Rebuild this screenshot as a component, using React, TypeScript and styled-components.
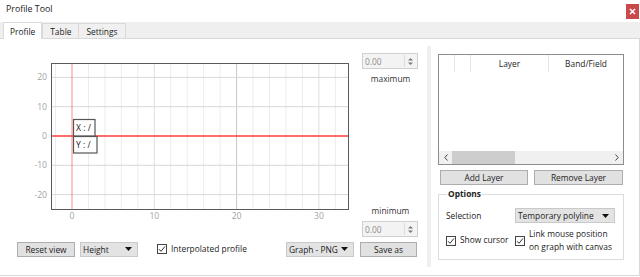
import React from "react";
import styled, { createGlobalStyle } from "styled-components";

const GlobalStyle = createGlobalStyle`
  html, body {
    margin: 0;
    padding: 0;
    background: #ffffff;
  }
  body {
    font-family: "Open Sans", "Liberation Sans", sans-serif;
    font-size: 8.4px;
    color: #222;
  }
`;

// chart scale: page px per unit, origin inside the svg
const X0 = 72;
const XS = 8.23;
const Y0 = 88;
const YS = 2.93;
const px = (v: number) => X0 + v * XS;
const py = (v: number) => Y0 - v * YS;

const xMinor = [-2, 2, 4, 6, 8, 12, 14, 16, 18, 22, 24, 26, 28, 32];
const xMajor = [10, 20, 30];
const yLines = [20, 10, -10, -20];

const Caret = () => (
  <svg width="7" height="4" viewBox="0 0 7 4">
    <path d="M0 0h7L3.5 4z" fill="#111" />
  </svg>
);

const Check = () => (
  <svg width="8" height="8" viewBox="0 0 8 8">
    <path d="M1 4.2l2 2.1L7 1.4" fill="none" stroke="#333" strokeWidth="1" />
  </svg>
);

const Chart = () => (
  <svg width="360" height="190" viewBox="0 0 360 190">
    {xMinor.map((v) => (
      <line key={v} x1={px(v)} x2={px(v)} y1={15.5} y2={161} stroke="#ececec" />
    ))}
    {xMajor.map((v) => (
      <line
        key={v}
        x1={px(v)}
        x2={px(v)}
        y1={15.5}
        y2={161}
        stroke={v === 20 ? "#c6c6c6" : "#dedede"}
      />
    ))}
    {yLines.map((v) => (
      <line key={v} x1={51.5} x2={348.5} y1={py(v)} y2={py(v)} stroke="#d8d8d8" />
    ))}
    <line x1={px(0)} x2={px(0)} y1={15.5} y2={161} stroke="#ff8a8a" />
    <line x1={51.5} x2={348.5} y1={py(0)} y2={py(0)} stroke="#ff3b3b" strokeWidth="1.3" />
    <rect x={51.5} y={15.5} width={297} height={146} fill="none" stroke="#5a5a5a" />
    <g fontFamily="Open Sans, Liberation Sans, sans-serif" fontSize="8.6" fill="#a3a3a3">
      {[20, 10, 0, -10, -20].map((v) => (
        <text key={v} x={47} y={py(v) + 3} textAnchor="end">
          {v}
        </text>
      ))}
      {[0, 10, 20, 30].map((v) => (
        <text key={v} x={px(v)} y={171} textAnchor="middle">
          {v}
        </text>
      ))}
    </g>
    <g fontFamily="Open Sans, Liberation Sans, sans-serif" fontSize="8.6" fill="#222">
      <rect x={73.5} y={71.5} width={21.5} height={16.5} fill="#fff" stroke="#555" strokeWidth="1.2" />
      <text x={76} y={83}>X : /</text>
      <rect x={73.5} y={88.5} width={23.5} height={16.5} fill="#fff" stroke="#555" strokeWidth="1.2" />
      <text x={76} y={100}>Y : /</text>
    </g>
  </svg>
);

const SpinArrows = () => (
  <svg width="7" height="9" viewBox="0 0 7 9">
    <path d="M1 3.5h5L3.5 1z" fill="#777" />
    <path d="M1 5.5h5L3.5 8z" fill="#777" />
  </svg>
);

const Spin = () => (
  <SpinBox>
    <SpinValue>0.00</SpinValue>
    <SpinButtons>
      <SpinArrows />
    </SpinButtons>
  </SpinBox>
);

const App = () => {
  return (
    <>
      <GlobalStyle />
      <Window>
        <TitleBar>
          <Title>Profile Tool</Title>
          <CloseButton>
            <svg width="7" height="7" viewBox="0 0 7 7">
              <path d="M1 1l5 5M6 1L1 6" stroke="#fff" strokeWidth="1.5" />
            </svg>
          </CloseButton>
        </TitleBar>
        <TabBar>
          <Tab $active>Profile</Tab>
          <Tab>Table</Tab>
          <Tab>Settings</Tab>
        </TabBar>
        <Pane>
          <LeftPanel>
            <PlotRow>
              <Chart />
              <SideColumn>
                <SpinGroup>
                  <Spin />
                  <Caption>maximum</Caption>
                </SpinGroup>
                <SpinGroup>
                  <Caption>minimum</Caption>
                  <Spin />
                </SpinGroup>
              </SideColumn>
            </PlotRow>
            <ControlRow>
              <Button $width={58}>Reset view</Button>
              <Combo $width={58}>
                <span>Height</span>
                <Caret />
              </Combo>
              <CheckLabel $indent={14}>
                <CheckBox>
                  <Check />
                </CheckBox>
                Interpolated profile
              </CheckLabel>
              <Combo $width={68} $push>
                <span>Graph - PNG</span>
                <Caret />
              </Combo>
              <Button $width={57}>Save as</Button>
            </ControlRow>
          </LeftPanel>
          <Splitter />
          <RightPanel>
            <LayerTable>
              <TableHeader>
                <HeaderCell />
                <HeaderCell />
                <HeaderCell>Layer</HeaderCell>
                <HeaderCell $last>Band/Field</HeaderCell>
              </TableHeader>
              <TableBody />
              <HScroll>
                <ScrollArrow>
                  <svg width="4" height="7" viewBox="0 0 4 7">
                    <path d="M3.5 0.5L0.8 3.5l2.7 3" fill="none" stroke="#444" />
                  </svg>
                </ScrollArrow>
                <ScrollTrack>
                  <ScrollThumb />
                </ScrollTrack>
                <ScrollArrow>
                  <svg width="4" height="7" viewBox="0 0 4 7">
                    <path d="M0.5 0.5l2.7 3-2.7 3" fill="none" stroke="#444" />
                  </svg>
                </ScrollArrow>
              </HScroll>
            </LayerTable>
            <ButtonRow>
              <Button>Add Layer</Button>
              <Button>Remove Layer</Button>
            </ButtonRow>
            <GroupBox>
              <Legend>Options</Legend>
              <OptionsGrid>
                <span>Selection</span>
                <Combo $width={100}>
                  <span>Temporary polyline</span>
                  <Caret />
                </Combo>
                <CheckLabel>
                  <CheckBox>
                    <Check />
                  </CheckBox>
                  Show cursor
                </CheckLabel>
                <CheckLabel>
                  <CheckBox>
                    <Check />
                  </CheckBox>
                  <span>
                    Link mouse position
                    <br />
                    on graph with canvas
                  </span>
                </CheckLabel>
              </OptionsGrid>
            </GroupBox>
          </RightPanel>
        </Pane>
      </Window>
    </>
  );
};

const Window = styled.div`
  width: 640px;
  height: 277px;
  display: flex;
  flex-direction: column;
  overflow: hidden;
  background: #fff;
`;

const TitleBar = styled.div`
  height: 22px;
  display: flex;
  align-items: center;
  justify-content: space-between;
  padding: 0 1px 0 6px;
  box-sizing: border-box;
`;

const Title = styled.div`
  font-size: 8.8px;
  color: #222;
  margin-top: -5px;
`;

const CloseButton = styled.div`
  width: 13px;
  height: 15px;
  background: #c94a4a;
  display: flex;
  align-items: center;
  justify-content: center;
`;

const TabBar = styled.div`
  height: 16px;
  background: #efefef;
  border-bottom: 1px solid #d9d9d9;
  display: flex;
  align-items: flex-end;
  padding-left: 3px;
`;

const Tab = styled.div<{ $active?: boolean }>`
  box-sizing: border-box;
  height: ${(p) => (p.$active ? "17px" : "15px")};
  margin-bottom: ${(p) => (p.$active ? "-1px" : "0")};
  padding: 0 ${(p) => (p.$active ? "6px" : "7px")};
  display: flex;
  align-items: center;
  background: ${(p) => (p.$active ? "#fff" : "#f0f0f0")};
  border: 1px solid #d9d9d9;
  border-bottom: none;
  margin-left: ${(p) => (p.$active ? "0" : "-1px")};
  color: #222;
  position: relative;
  z-index: ${(p) => (p.$active ? 1 : 0)};
  &:nth-child(2) {
    margin-left: 0;
  }
`;

const Pane = styled.div`
  height: 237px;
  display: flex;
  box-sizing: border-box;
  border-right: 1px solid #d9d9d9;
  border-bottom: 1px solid #d9d9d9;
`;

const LeftPanel = styled.div`
  width: 427px;
  padding-top: 9px;
  display: flex;
  flex-direction: column;
`;

const PlotRow = styled.div`
  display: flex;
  height: 190px;
`;

const SideColumn = styled.div`
  width: 57px;
  margin-left: 2px;
  display: flex;
  flex-direction: column;
  justify-content: space-between;
  padding: 5px 0 1px;
`;

const SpinGroup = styled.div`
  display: flex;
  flex-direction: column;
  gap: 5px;
`;

const SpinBox = styled.div`
  width: 56px;
  height: 16px;
  box-sizing: border-box;
  border: 1px solid #cfcfcf;
  background: #f3f3f3;
  display: flex;
  align-items: center;
`;

const SpinValue = styled.span`
  flex: 1;
  padding-left: 2px;
  color: #8e8e8e;
`;

const SpinButtons = styled.div`
  width: 11px;
  height: 12px;
  margin-right: 1px;
  border-left: 1px solid #dcdcdc;
  display: flex;
  align-items: center;
  justify-content: center;
`;

const Caption = styled.div`
  text-align: center;
  line-height: 10px;
  color: #333;
`;

const ControlRow = styled.div`
  display: flex;
  align-items: center;
  height: 16px;
  margin-top: 3px;
  padding: 0 10px 0 17px;
  gap: 5px;
`;

const Button = styled.div<{ $width?: number }>`
  ${(p) => (p.$width ? `width: ${p.$width}px;` : "")}
  height: 15px;
  box-sizing: border-box;
  border: 1px solid #adadad;
  background: #e1e1e1;
  display: flex;
  align-items: center;
  justify-content: center;
  color: #222;
`;

const Combo = styled.div<{ $width: number; $push?: boolean }>`
  width: ${(p) => p.$width}px;
  height: 15px;
  box-sizing: border-box;
  border: 1px solid #c9c9c9;
  background: #e3e3e3;
  display: flex;
  align-items: center;
  justify-content: space-between;
  padding: 0 5px 0 2px;
  color: #222;
  ${(p) => (p.$push ? "margin-left: auto; margin-right: 1px;" : "")}
`;

const CheckLabel = styled.label<{ $indent?: number }>`
  display: flex;
  align-items: center;
  gap: 4px;
  margin-left: ${(p) => p.$indent ?? 0}px;
  color: #222;
  line-height: 12.5px;
`;

const CheckBox = styled.span`
  width: 10px;
  height: 10px;
  box-sizing: border-box;
  border: 1px solid #444;
  background: #fff;
  display: flex;
  align-items: center;
  justify-content: center;
  flex-shrink: 0;
`;

const Splitter = styled.div`
  width: 4px;
  background: #efefef;
  margin: 7px 0 8px;
`;

const RightPanel = styled.div`
  flex: 1;
  padding: 15px 15px 0 7px;
  display: flex;
  flex-direction: column;
`;

const LayerTable = styled.div`
  height: 111px;
  box-sizing: border-box;
  border: 1px solid #8c8c8c;
  display: flex;
  flex-direction: column;
`;

const TableHeader = styled.div`
  height: 17px;
  display: grid;
  grid-template-columns: 16px 16px 78px 1fr;
`;

const HeaderCell = styled.div<{ $last?: boolean }>`
  border-right: ${(p) => (p.$last ? "none" : "1px solid #e5e5e5")};
  display: flex;
  align-items: center;
  justify-content: center;
  color: #222;
`;

const TableBody = styled.div`
  flex: 1;
`;

const HScroll = styled.div`
  height: 13px;
  display: flex;
  background: #f0f0f0;
`;

const ScrollArrow = styled.div`
  width: 13px;
  display: flex;
  align-items: center;
  justify-content: center;
`;

const ScrollTrack = styled.div`
  flex: 1;
  display: flex;
`;

const ScrollThumb = styled.div`
  width: 63px;
  background: #cdcdcd;
`;

const ButtonRow = styled.div`
  display: grid;
  grid-template-columns: 88px 89px;
  gap: 6px;
  margin-top: 5px;
  padding-left: 2px;
`;

const GroupBox = styled.fieldset`
  margin: 4px 0 0;
  height: 71px;
  box-sizing: border-box;
  border: 1px solid #dcdcdc;
  padding: 9px 6px 0 7px;
`;

const Legend = styled.legend`
  font-weight: bold;
  padding: 0 1px;
  margin-left: 1px;
  line-height: 10px;
  color: #222;
`;

const OptionsGrid = styled.div`
  display: grid;
  grid-template-columns: 69px 100px;
  align-items: center;
  row-gap: 5px;
  color: #222;
`;

export default App;
